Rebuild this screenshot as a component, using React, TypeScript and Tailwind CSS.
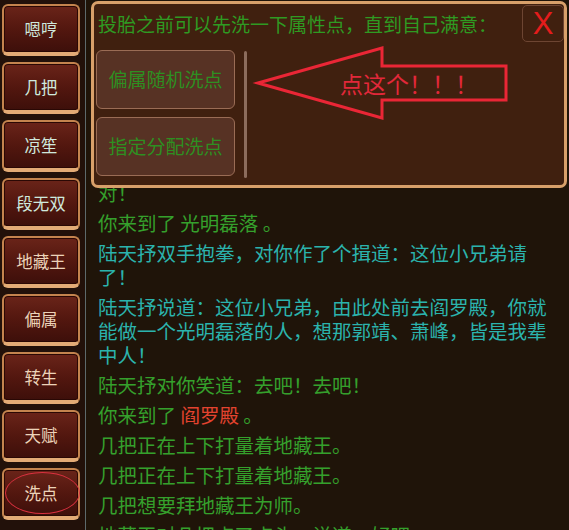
const FONT = { fontFamily: '"Noto Sans CJK SC", "Noto Sans", sans-serif' };

const sideButtons = [
  { label: "嗯哼", tone: "mint" },
  { label: "几把", tone: "mint" },
  { label: "凉笙", tone: "mint" },
  { label: "段无双", tone: "mint" },
  { label: "地藏王", tone: "sand" },
  { label: "偏属", tone: "sand" },
  { label: "转生", tone: "sand" },
  { label: "天赋", tone: "sand" },
  { label: "洗点", tone: "sand", circled: true },
];

type Part = { text: string; red?: boolean };
type Line = { color: "green" | "cyan"; parts: Part[] };

const log: Line[] = [
  { color: "green", parts: [{ text: "对！" }] },
  { color: "green", parts: [{ text: "你来到了 光明磊落 。" }] },
  { color: "cyan", parts: [{ text: "陆天抒双手抱拳，对你作了个揖道：这位小兄弟请了！" }] },
  {
    color: "cyan",
    parts: [{ text: "陆天抒说道：这位小兄弟，由此处前去阎罗殿，你就能做一个光明磊落的人，想那郭靖、萧峰，皆是我辈中人！" }],
  },
  { color: "green", parts: [{ text: "陆天抒对你笑道：去吧！去吧！" }] },
  { color: "green", parts: [{ text: "你来到了 " }, { text: "阎罗殿", red: true }, { text: " 。" }] },
  { color: "green", parts: [{ text: "几把正在上下打量着地藏王。" }] },
  { color: "green", parts: [{ text: "几把正在上下打量着地藏王。" }] },
  { color: "green", parts: [{ text: "几把想要拜地藏王为师。" }] },
  { color: "green", parts: [{ text: "地藏王对几把点了点头，说道：好吧。" }] },
];

function SideButton({ label, tone, circled }: { label: string; tone: string; circled?: boolean }) {
  return (
    <div className="relative h-[52px] w-[78px] rounded-[6px] border-2 border-b-4 border-[#c4844e] border-b-[#e3ab76] bg-gradient-to-b from-[#6a2419] via-[#53170f] to-[#3d0f0a] shadow-[inset_0_0_0_1px_#2a0804] flex items-center justify-center">
      <span
        className={`text-[16.5px] leading-none ${tone === "mint" ? "text-[#cfe9de]" : "text-[#ecd3b9]"}`}
        style={FONT}
      >
        {label}
      </span>
      {circled && (
        <div className="absolute left-[1px] top-[2px] h-[42px] w-[75px] rounded-[50%] border-[1.5px] border-[#d9303f]" />
      )}
    </div>
  );
}

function WashDialog() {
  return (
    <div className="absolute left-[5px] top-[1px] h-[187px] w-[476px] rounded-[7px] border-[3px] border-[#d8a06a] bg-[#40200f]">
      <div className="pl-[4px] pt-[8px] text-[19px] leading-[24px] text-[#2f9a22]" style={FONT}>
        投胎之前可以先洗一下属性点，直到自己满意：
      </div>

      <div className="absolute right-0 top-[1px] flex h-[37px] w-[42px] items-center justify-center rounded-[5px] border border-[#6d4532]">
        <span className="text-[31px] leading-none text-[#e41c1c]" style={{ fontFamily: '"Liberation Sans", sans-serif' }}>
          X
        </span>
      </div>

      <div className="mt-[14px] flex pl-[2px]">
        <div className="flex w-[139px] flex-col gap-[8px]">
          {["偏属随机洗点", "指定分配洗点"].map((t) => (
            <div
              key={t}
              className="flex h-[59px] items-center justify-center rounded-[6px] border-[1.5px] border-[#9a6c55] bg-[#573224]"
            >
              <span className="text-[19px] text-[#2e8f21]" style={FONT}>
                {t}
              </span>
            </div>
          ))}
        </div>
        <div className="ml-[9px] mt-[1px] h-[127px] w-[3px] rounded-full bg-[#8c6c5c]" />
        <div className="relative flex-1">
          <svg width="270" height="80" viewBox="0 0 270 80" overflow="visible" className="absolute left-0 top-0">
            <polygon
              points="11,33 135,-2 135,16 259,16 259,50 135,50 135,68"
              fill="none"
              stroke="#ea2636"
              strokeWidth="3"
              strokeLinejoin="miter"
            />
          </svg>
          <span
            className="absolute left-[93px] top-[19px] whitespace-nowrap text-[23px] leading-[28px] text-[#e2283a]"
            style={FONT}
          >
            点这个！！！
          </span>
        </div>
      </div>
    </div>
  );
}

export default function App() {
  return (
    <div className="flex h-[530px] w-[569px] overflow-hidden bg-[#1f1409]">
      <div className="flex h-full w-[86px] flex-col gap-[6px] border-r border-[#5d6a6c] bg-[#22110a] pl-[2px] pt-[4px]">
        {sideButtons.map((b) => (
          <SideButton key={b.label} {...b} />
        ))}
      </div>

      <div className="relative flex-1 overflow-hidden">
        <div className="pl-[12px] pr-[12px] pt-[181px]" style={FONT}>
          {log.map((line, i) => (
            <p
              key={i}
              className={`mb-[6px] text-[19.5px] leading-[24px] ${line.color === "cyan" ? "text-[#2bb3ad]" : "text-[#35a02c]"}`}
            >
              {line.parts.map((p, j) => (
                <span key={j} className={p.red ? "text-[#e4432f]" : undefined}>
                  {p.text}
                </span>
              ))}
            </p>
          ))}
        </div>
        <WashDialog />
      </div>
    </div>
  );
}
